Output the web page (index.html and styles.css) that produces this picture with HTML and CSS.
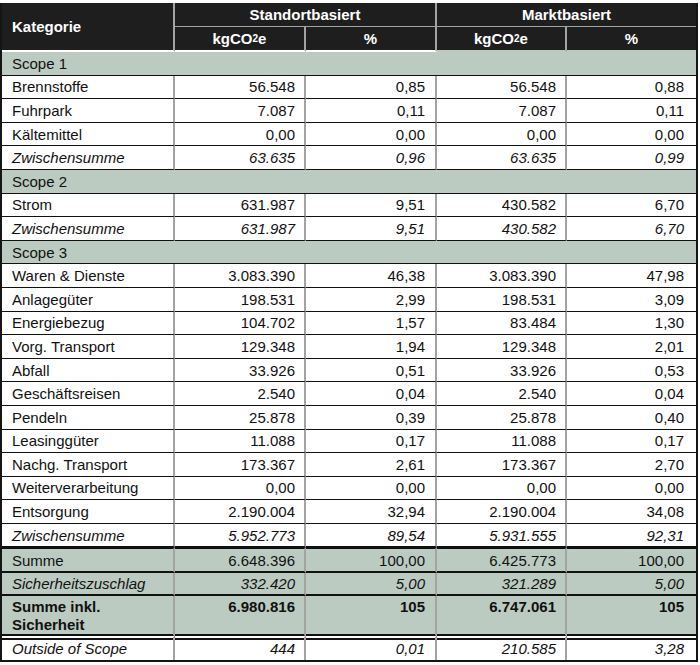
FILE: index.html
```html
<!DOCTYPE html>
<html lang="de">
<head>
<meta charset="utf-8">
<title>Emissionen</title>
<link rel="stylesheet" href="styles.css">
</head>
<body>
<div class="tbl">
  <div class="head">
    <div class="h-kat">Kategorie</div>
    <div class="h-std">Standortbasiert</div>
    <div class="h-mkt">Marktbasiert</div>
    <div class="h-sub std">kgCO<span class="sub">2</span>e</div>
    <div class="h-sub std">%</div>
    <div class="h-sub mkt">kgCO<span class="sub">2</span>e</div>
    <div class="h-sub mkt last">%</div>
  </div>

  <div class="scope">Scope 1</div>
  <div class="row"><div>Brennstoffe</div><div class="n">56.548</div><div class="n">0,85</div><div class="n">56.548</div><div class="n">0,88</div></div>
  <div class="row"><div>Fuhrpark</div><div class="n">7.087</div><div class="n">0,11</div><div class="n">7.087</div><div class="n">0,11</div></div>
  <div class="row"><div>Kältemittel</div><div class="n">0,00</div><div class="n">0,00</div><div class="n">0,00</div><div class="n">0,00</div></div>
  <div class="row it"><div>Zwischensumme</div><div class="n">63.635</div><div class="n">0,96</div><div class="n">63.635</div><div class="n">0,99</div></div>

  <div class="scope">Scope 2</div>
  <div class="row"><div>Strom</div><div class="n">631.987</div><div class="n">9,51</div><div class="n">430.582</div><div class="n">6,70</div></div>
  <div class="row it"><div>Zwischensumme</div><div class="n">631.987</div><div class="n">9,51</div><div class="n">430.582</div><div class="n">6,70</div></div>

  <div class="scope">Scope 3</div>
  <div class="row"><div>Waren &amp; Dienste</div><div class="n">3.083.390</div><div class="n">46,38</div><div class="n">3.083.390</div><div class="n">47,98</div></div>
  <div class="row"><div>Anlagegüter</div><div class="n">198.531</div><div class="n">2,99</div><div class="n">198.531</div><div class="n">3,09</div></div>
  <div class="row"><div>Energiebezug</div><div class="n">104.702</div><div class="n">1,57</div><div class="n">83.484</div><div class="n">1,30</div></div>
  <div class="row"><div>Vorg. Transport</div><div class="n">129.348</div><div class="n">1,94</div><div class="n">129.348</div><div class="n">2,01</div></div>
  <div class="row"><div>Abfall</div><div class="n">33.926</div><div class="n">0,51</div><div class="n">33.926</div><div class="n">0,53</div></div>
  <div class="row"><div>Geschäftsreisen</div><div class="n">2.540</div><div class="n">0,04</div><div class="n">2.540</div><div class="n">0,04</div></div>
  <div class="row"><div>Pendeln</div><div class="n">25.878</div><div class="n">0,39</div><div class="n">25.878</div><div class="n">0,40</div></div>
  <div class="row"><div>Leasinggüter</div><div class="n">11.088</div><div class="n">0,17</div><div class="n">11.088</div><div class="n">0,17</div></div>
  <div class="row"><div>Nachg. Transport</div><div class="n">173.367</div><div class="n">2,61</div><div class="n">173.367</div><div class="n">2,70</div></div>
  <div class="row"><div>Weiterverarbeitung</div><div class="n">0,00</div><div class="n">0,00</div><div class="n">0,00</div><div class="n">0,00</div></div>
  <div class="row"><div>Entsorgung</div><div class="n">2.190.004</div><div class="n">32,94</div><div class="n">2.190.004</div><div class="n">34,08</div></div>
  <div class="row it"><div>Zwischensumme</div><div class="n">5.952.773</div><div class="n">89,54</div><div class="n">5.931.555</div><div class="n">92,31</div></div>

  <div class="row tot s1"><div>Summe</div><div class="n">6.648.396</div><div class="n">100,00</div><div class="n">6.425.773</div><div class="n">100,00</div></div>
  <div class="row tot s2 it"><div>Sicherheitszuschlag</div><div class="n">332.420</div><div class="n">5,00</div><div class="n">321.289</div><div class="n">5,00</div></div>
  <div class="row tot s3"><div>Summe inkl.<br>Sicherheit</div><div class="n">6.980.816</div><div class="n">105</div><div class="n">6.747.061</div><div class="n">105</div></div>
  <div class="row s4 it"><div>Outside of Scope</div><div class="n">444</div><div class="n">0,01</div><div class="n">210.585</div><div class="n">3,28</div></div>
</div>
</body>
</html>
```
FILE: styles.css
```css
* { box-sizing: border-box; }
body {
  margin: 0;
  background: #fff;
  font-family: "Liberation Sans", Arial, sans-serif;
  font-size: 15px;
  color: #111;
}
.tbl {
  width: 698px;
  margin-top: 3px;
  border: 2px solid #151515;
  border-top: 0;
  background: #fff;
}
.head {
  display: grid;
  grid-template-columns: 173px 131px 131px 130px 129px;
  grid-template-rows: 24px 25px;
  background: #1e1e1e;
  color: #fff;
  font-weight: bold;
  line-height: 17px;
}
.head > div {
  display: flex;
  align-items: center;
  justify-content: center;
}
.head .h-kat {
  grid-row: 1 / 3;
  justify-content: flex-start;
  padding-left: 10px;
  border-right: 2px solid #a3a3a3;
  border-bottom: 2px solid #fff;
}
.head .h-std {
  grid-column: 2 / 4;
  border-right: 2px solid #a3a3a3;
  border-bottom: 1px solid #a3a3a3;
}
.head .h-mkt {
  grid-column: 4 / 6;
  border-bottom: 1px solid #a3a3a3;
}
.head .h-sub { border-right: 2px solid #a3a3a3; }
.head .h-sub.std { border-bottom: 2px solid #fff; }
.head .h-sub.mkt { border-bottom: 2px solid #bccbc1; }
.head .h-sub.last { border-right: 0; }
.sub { font-size: 10px; }

.scope {
  height: 23.6px;
  background: #bccbc1;
  border-bottom: 1px solid #111;
  padding-left: 10px;
  display: flex;
  align-items: center;
  line-height: 17px;
}
.row {
  display: grid;
  grid-template-columns: 173px 131px 131px 130px 129px;
  height: 23.6px;
}
.row > div {
  display: flex;
  align-items: center;
  padding: 0 10px;
  line-height: 17px;
  border-right: 2px solid #a3a3a3;
  border-bottom: 1px solid #111;
  white-space: nowrap;
}
.row > div:nth-child(2) { padding-right: 9px; }
.row > div:nth-child(4) { padding-right: 9px; }
.row > div:last-child { border-right: 0; padding-right: 12px; }
.row > .n { justify-content: flex-end; }
.it { font-style: italic; }

.tot > div { background: #bccbc1; background-clip: padding-box; }
.s1 { height: 25.5px; }
.s1 > div { border-top: 2px solid #111; border-bottom: 2px solid #111; }
.s2 { height: 23.5px; }
.s2 > div { border-bottom: 2px solid #111; }
.s3 { height: 41px; font-weight: bold; }
.s3 > div {
  align-items: flex-start;
  padding-top: 2px;
  line-height: 18px;
  border-bottom: 6px double #111;
}
.s4 { height: 23px; }
.s4 > div { border-bottom: 0; }
```
